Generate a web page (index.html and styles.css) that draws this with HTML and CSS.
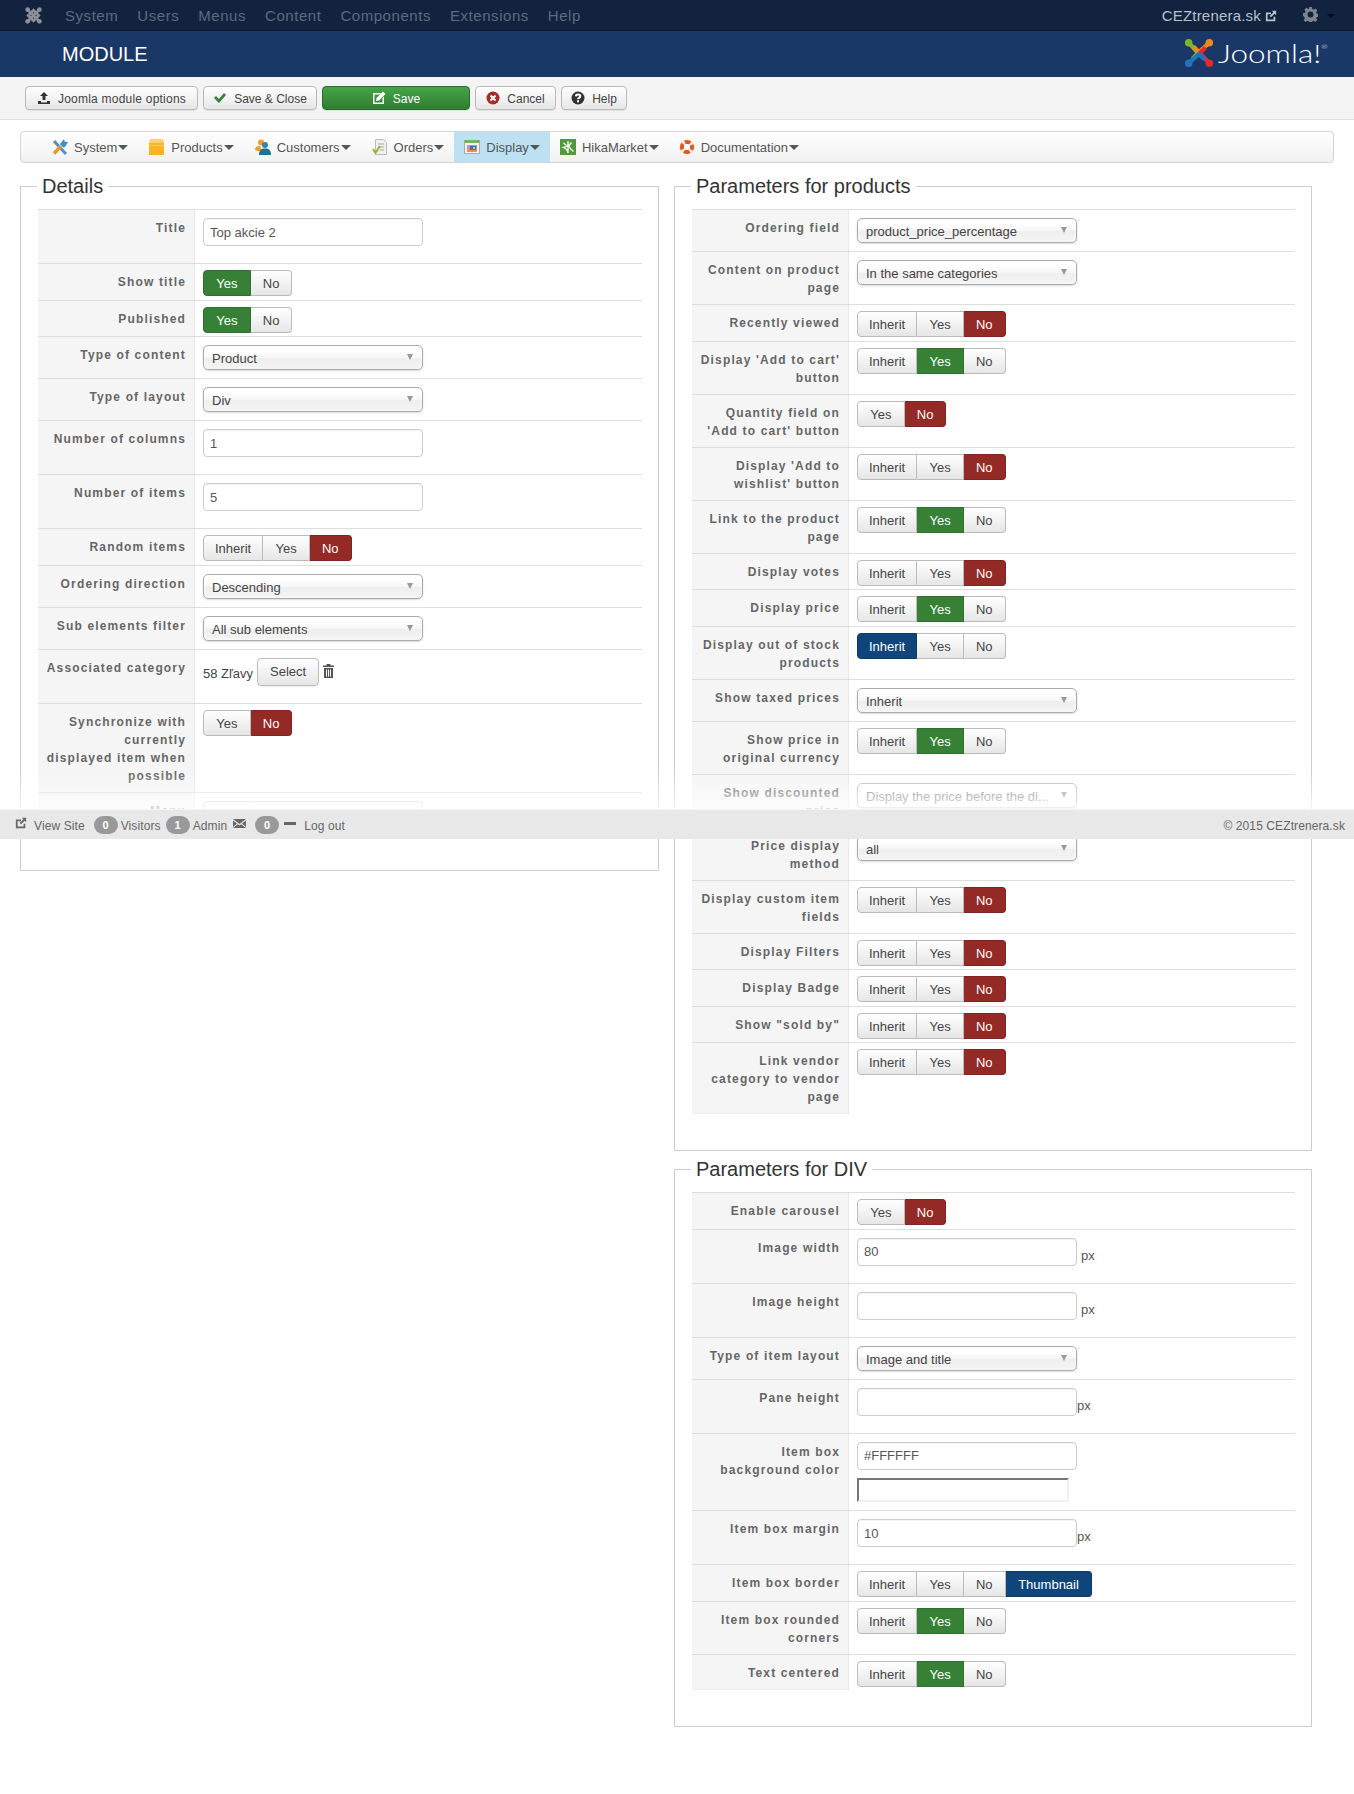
FILE: index.html
```html
<!DOCTYPE html>
<html lang="en">
<head>
    <meta charset="UTF-8">
    <title>MODULE</title>
    <link rel="stylesheet" href="styles.css">
</head>
<body>

<svg class="defs" aria-hidden="true">
    <symbol id="share" viewBox="0 0 14 14">
        <path fill="currentColor" d="M1 3h6v2H3v6h7V8h2v5H1zM8 1h5v5l-1.700-1.700L7 8.600 5.400 7l4.300-4.300z"/>
    </symbol>
</svg>

<nav class="topnav">
    <svg class="topnav-logo" viewBox="0 0 32 32">
        <path fill="none" stroke="currentColor" stroke-width="5" d="M16 6 26 16 16 26 6 16zM6 6 26 26M26 6 6 26"/>
        <g fill="currentColor">
            <circle cx="5" cy="5" r="4.500"/><circle cx="27" cy="5" r="4.500"/><circle cx="27" cy="27" r="4.500"/><circle cx="5" cy="27" r="4.500"/>
        </g>
    </svg>
    <a href="#">System</a>
    <a href="#">Users</a>
    <a href="#">Menus</a>
    <a href="#">Content</a>
    <a href="#">Components</a>
    <a href="#">Extensions</a>
    <a href="#">Help</a>
    <div class="topnav-right">
        <a href="#" class="site-link">CEZtrenera.sk</a>
        <svg class="site-icon"><use href="#share"/></svg>
        <svg class="gear" viewBox="0 0 16 16"><path fill="currentColor" fill-rule="evenodd" d="M6.500 0h3l.4 2.200 1.400.6 1.900-1.300 2.100 2.100-1.300 1.900.6 1.400 2.400.4v2.900l-2.400.4-.6 1.400 1.300 1.900-2.100 2.100-1.900-1.300-1.400.6-.4 1.500h-3l-.4-1.500-1.400-.6-1.900 1.300-2.100-2.100 1.300-1.900-.6-1.400L0 9.400V6.500l2.200-.4.6-1.400-1.300-1.900 2.100-2.100 1.900 1.300 1.400-.6zM8 4.800a3.200 3.200 0 1 0 0 6.400 3.200 3.200 0 0 0 0-6.400z"/></svg>
        <span class="gear-caret"></span>
    </div>
</nav>

<header class="pagehead">
    <h1>MODULE</h1>
    <div class="brand">
        <svg class="brand-icon" viewBox="0 0 32 32">
            <g fill="none" stroke-width="4.500" stroke-linejoin="round">
                <path stroke="#7ab52f" d="M5 5 15 16 9 22"/>
                <path stroke="#f18a1c" d="M27 5 16 15 10 9"/>
                <path stroke="#e5292f" d="M27 27 17 16 23 10"/>
                <path stroke="#1f74bb" d="M5 27 16 17 22 23"/>
            </g>
            <circle cx="5" cy="5" r="4" fill="#7ab52f"/><circle cx="27" cy="5" r="4" fill="#f18a1c"/>
            <circle cx="27" cy="27" r="4" fill="#e5292f"/><circle cx="5" cy="27" r="4" fill="#1f74bb"/>
        </svg>
        <span class="brand-name">Joomla!<sup>®</sup></span>
    </div>
</header>

<div class="toolbar">
    <button class="btn btn-opts">
        <svg class="ic ic-dark" viewBox="0 0 14 14"><path fill="currentColor" d="M7 1l4 4H8.500v4h-3V5H3zM1 10h3v1.500h6V10h3v3H1z"/></svg>Joomla module options
    </button>
    <button class="btn btn-close">
        <svg class="ic ic-green" viewBox="0 0 14 14"><path fill="currentColor" d="M1 7l2-2 3 3 5-6 2 2-7 8z"/></svg>Save &amp; Close
    </button>
    <button class="btn btn-save">
        <svg class="ic" viewBox="0 0 14 14"><path fill="currentColor" d="M1 2h8L7.500 3.500H2.500v8h8V7L12 5.500V13H1zM11 .5 13.500 3 7 9.500 4 10l.5-3z"/></svg>Save
    </button>
    <button class="btn btn-cancel">
        <svg class="ic ic-red" viewBox="0 0 14 14"><circle cx="7" cy="7" r="6.500" fill="currentColor"/><path stroke="#fff" stroke-width="2" d="M4.500 4.500l5 5m0-5l-5 5"/></svg>Cancel
    </button>
    <button class="btn btn-help">
        <svg class="ic ic-dark" viewBox="0 0 14 14"><circle cx="7" cy="7" r="6.500" fill="currentColor"/><path fill="none" stroke="#fff" stroke-width="2" d="M4.800 5.400C5 2.800 9.300 3 9.300 5.300 9.300 6.800 7 6.800 7 8.300"/><rect x="6" y="9.300" width="2" height="2" fill="#fff"/></svg>Help
    </button>
</div>

<ul class="menubar">
    <li><svg class="mi" viewBox="0 0 16 16"><path stroke="#4b93cf" stroke-width="3" d="M2 2l12 13"/><path stroke="#eb962c" stroke-width="3.500" d="M2 14.500 9 7"/><path fill="#3d8fd0" d="M8 5l4-5 .8 2.800L16 3l-3 5-2 .5z"/></svg>System<span class="caret"></span></li>
    <li><svg class="mi" viewBox="0 0 16 16"><rect x="0" y="4" width="15" height="12" fill="#fbb321"/><path fill="#fcd36a" d="M1 0h13l1 4H0z"/><rect y="6" width="15" height="1" fill="#ffd27a"/></svg>Products<span class="caret"></span></li>
    <li><svg class="mi" viewBox="0 0 16 16"><circle cx="6" cy="3.500" r="3" fill="#f29b2a"/><path fill="#f29b2a" d="M0 11c0-3 2-4 5-4l2 5H2z"/><circle cx="10" cy="6" r="3" fill="#2f86ad"/><path fill="#1f6f96" d="M4 16c0-5 2-6.500 6-6.500s6 1.500 6 6.500z"/></svg>Customers<span class="caret"></span></li>
    <li><svg class="mi" viewBox="0 0 16 16"><path fill="#f0f0ee" stroke="#bbb" d="M3.500.5h8l3 3v12h-11z"/><path stroke="#aaa" d="M6 5h6M6 8h6M8 11h4"/><path fill="none" stroke="#8cb92e" stroke-width="2" d="M1 10l2.500 4L8 7"/></svg>Orders<span class="caret"></span></li>
    <li class="active"><svg class="mi" viewBox="0 0 16 16"><rect x=".5" y="1.500" width="15" height="13" fill="#f4f4f4" stroke="#aaa"/><rect x="1" y="1" width="14" height="3" fill="#6cb95b"/><rect x="3" y="6" width="10" height="7" fill="#e88a80"/><rect x="6" y="7" width="6" height="4" fill="#3478c0"/><rect x="9" y="8" width="2" height="2" fill="#f2c33a"/></svg>Display<span class="caret"></span></li>
    <li><svg class="mi" viewBox="0 0 16 16"><rect width="16" height="16" fill="#4f9a3c"/><path fill="none" stroke="#fff" stroke-width="1.300" d="M8 2v12C7.500 11 6 9.500 3.500 8.500 6 8 7.500 6.500 8 5.500 9 8 10 10 13.500 12.500M11.500 3.500 8.500 7M3.500 4l2.500 2"/></svg>HikaMarket<span class="caret"></span></li>
    <li><svg class="mi" viewBox="0 0 16 16"><circle cx="8" cy="8" r="7.800" fill="#e8e8e8"/><circle cx="8" cy="8" r="5" fill="none" stroke="#e2581c" stroke-width="4" stroke-dasharray="5.500 2.350" stroke-dashoffset="2.750"/><circle cx="8" cy="8" r="3" fill="#fff"/></svg>Documentation<span class="caret"></span></li>
</ul>

<div class="columns">
    <!-- Left column -->
    <div class="col col-left">
        <fieldset class="group group-details">
            <legend>Details</legend>
            <div class="row"><div class="key">Title</div><div class="val val-input"><input class="field" type="text" value="Top akcie 2"></div></div>
            <div class="row"><div class="key">Show title</div><div class="val val-radio"><div class="radio"><span class="opt-yes on-yes">Yes</span><span>No</span></div></div></div>
            <div class="row"><div class="key">Published</div><div class="val val-radio"><div class="radio"><span class="opt-yes on-yes">Yes</span><span>No</span></div></div></div>
            <div class="row"><div class="key">Type of content</div><div class="val val-select"><div class="chzn"><span>Product</span></div></div></div>
            <div class="row"><div class="key">Type of layout</div><div class="val val-select"><div class="chzn"><span>Div</span></div></div></div>
            <div class="row"><div class="key">Number of columns</div><div class="val val-input"><input class="field" type="text" value="1"></div></div>
            <div class="row"><div class="key">Number of items</div><div class="val val-input"><input class="field" type="text" value="5"></div></div>
            <div class="row"><div class="key">Random items</div><div class="val val-radio"><div class="radio"><span class="opt-inh">Inherit</span><span class="opt-yes">Yes</span><span class="on-no">No</span></div></div></div>
            <div class="row"><div class="key">Ordering direction</div><div class="val val-select"><div class="chzn"><span>Descending</span></div></div></div>
            <div class="row"><div class="key">Sub elements filter</div><div class="val val-select"><div class="chzn"><span>All sub elements</span></div></div></div>
            <div class="row"><div class="key">Associated category</div>
                <div class="val val-cat">
                    <span class="cat-name">58 Zľavy</span>
                    <button class="btn btn-select">Select</button>
                    <svg class="trash" viewBox="0 0 11 14"><path fill="currentColor" d="M3.500 0h4v1.500H11V3H0V1.500h3.500zM1 4h9v10H1zM3 5.500v7h1v-7zm2 0v7h1v-7zm2 0v7h1v-7z"/></svg>
                </div>
            </div>
            <div class="row"><div class="key">Synchronize with<br>currently<br>displayed item when<br>possible</div><div class="val val-radio"><div class="radio"><span class="opt-yes">Yes</span><span class="on-no">No</span></div></div></div>
            <div class="row"><div class="key">Menu</div><div class="val val-menu"><input class="field" type="text"></div></div>
        </fieldset>
    </div>

    <!-- Right column -->
    <div class="col col-right">
        <fieldset class="group">
            <legend>Parameters for products</legend>
            <div class="row"><div class="key">Ordering field</div><div class="val val-select"><div class="chzn"><span>product_price_percentage</span></div></div></div>
            <div class="row"><div class="key">Content on product page</div><div class="val val-select"><div class="chzn"><span>In the same categories</span></div></div></div>
            <div class="row"><div class="key">Recently viewed</div><div class="val val-radio"><div class="radio"><span class="opt-inh">Inherit</span><span class="opt-yes">Yes</span><span class="on-no">No</span></div></div></div>
            <div class="row"><div class="key">Display 'Add to cart' button</div><div class="val val-radio"><div class="radio"><span class="opt-inh">Inherit</span><span class="opt-yes on-yes">Yes</span><span>No</span></div></div></div>
            <div class="row"><div class="key">Quantity field on 'Add to cart' button</div><div class="val val-radio"><div class="radio"><span class="opt-yes">Yes</span><span class="on-no">No</span></div></div></div>
            <div class="row"><div class="key">Display 'Add to wishlist' button</div><div class="val val-radio"><div class="radio"><span class="opt-inh">Inherit</span><span class="opt-yes">Yes</span><span class="on-no">No</span></div></div></div>
            <div class="row"><div class="key">Link to the product page</div><div class="val val-radio"><div class="radio"><span class="opt-inh">Inherit</span><span class="opt-yes on-yes">Yes</span><span>No</span></div></div></div>
            <div class="row"><div class="key">Display votes</div><div class="val val-radio"><div class="radio"><span class="opt-inh">Inherit</span><span class="opt-yes">Yes</span><span class="on-no">No</span></div></div></div>
            <div class="row"><div class="key">Display price</div><div class="val val-radio"><div class="radio"><span class="opt-inh">Inherit</span><span class="opt-yes on-yes">Yes</span><span>No</span></div></div></div>
            <div class="row"><div class="key">Display out of stock products</div><div class="val val-radio"><div class="radio"><span class="opt-inh on-def">Inherit</span><span class="opt-yes">Yes</span><span>No</span></div></div></div>
            <div class="row"><div class="key">Show taxed prices</div><div class="val val-select"><div class="chzn"><span>Inherit</span></div></div></div>
            <div class="row"><div class="key">Show price in original currency</div><div class="val val-radio"><div class="radio"><span class="opt-inh">Inherit</span><span class="opt-yes on-yes">Yes</span><span>No</span></div></div></div>
            <div class="row"><div class="key">Show discounted price</div><div class="val val-select"><div class="chzn chzn-off"><span>Display the price before the di...</span></div></div></div>
            <div class="row"><div class="key">Price display method</div><div class="val val-select"><div class="chzn"><span>all</span></div></div></div>
            <div class="row"><div class="key">Display custom item fields</div><div class="val val-radio"><div class="radio"><span class="opt-inh">Inherit</span><span class="opt-yes">Yes</span><span class="on-no">No</span></div></div></div>
            <div class="row"><div class="key">Display Filters</div><div class="val val-radio"><div class="radio"><span class="opt-inh">Inherit</span><span class="opt-yes">Yes</span><span class="on-no">No</span></div></div></div>
            <div class="row"><div class="key">Display Badge</div><div class="val val-radio"><div class="radio"><span class="opt-inh">Inherit</span><span class="opt-yes">Yes</span><span class="on-no">No</span></div></div></div>
            <div class="row"><div class="key">Show "sold by"</div><div class="val val-radio"><div class="radio"><span class="opt-inh">Inherit</span><span class="opt-yes">Yes</span><span class="on-no">No</span></div></div></div>
            <div class="row row-last"><div class="key">Link vendor category to vendor page</div><div class="val val-radio"><div class="radio"><span class="opt-inh">Inherit</span><span class="opt-yes">Yes</span><span class="on-no">No</span></div></div></div>
        </fieldset>

        <fieldset class="group">
            <legend>Parameters for DIV</legend>
            <div class="row"><div class="key">Enable carousel</div><div class="val val-radio"><div class="radio"><span class="opt-yes">Yes</span><span class="on-no">No</span></div></div></div>
            <div class="row"><div class="key">Image width</div><div class="val val-input"><input class="field" type="text" value="80"><span class="unit unit-gap">px</span></div></div>
            <div class="row"><div class="key">Image height</div><div class="val val-input"><input class="field" type="text"><span class="unit unit-gap">px</span></div></div>
            <div class="row"><div class="key">Type of item layout</div><div class="val val-select"><div class="chzn"><span>Image and title</span></div></div></div>
            <div class="row"><div class="key">Pane height</div><div class="val val-input"><input class="field" type="text"><span class="unit">px</span></div></div>
            <div class="row"><div class="key">Item box background color</div>
                <div class="val val-color">
                    <input class="field" type="text" value="#FFFFFF">
                    <div class="swatch"></div>
                </div>
            </div>
            <div class="row"><div class="key">Item box margin</div><div class="val val-input"><input class="field" type="text" value="10"><span class="unit">px</span></div></div>
            <div class="row"><div class="key">Item box border</div><div class="val val-radio"><div class="radio"><span class="opt-inh">Inherit</span><span class="opt-yes">Yes</span><span>No</span><span class="on-def">Thumbnail</span></div></div></div>
            <div class="row"><div class="key">Item box rounded corners</div><div class="val val-radio"><div class="radio"><span class="opt-inh">Inherit</span><span class="opt-yes on-yes">Yes</span><span>No</span></div></div></div>
            <div class="row row-last"><div class="key">Text centered</div><div class="val val-radio"><div class="radio"><span class="opt-inh">Inherit</span><span class="opt-yes on-yes">Yes</span><span>No</span></div></div></div>
        </fieldset>
    </div>
</div>

<!-- Status bar stays over the page -->
<div class="statusbar">
    <svg class="sb-icon"><use href="#share"/></svg>
    <span class="sb-text sb-view">View Site</span>
    <span class="badge">0</span><span class="sb-text">Visitors</span>
    <span class="badge">1</span><span class="sb-text">Admin</span>
    <svg class="sb-mail" viewBox="0 0 13 9"><path fill="currentColor" d="M0 0h13L6.500 5zM0 1.500 4 4.500 0 8zM13 1.500 9 4.500 13 8zM4.800 5.200 6.500 6.500 8.200 5.200 13 9H0z"/></svg>
    <span class="badge">0</span>
    <span class="sb-minus"></span>
    <span class="sb-text">Log out</span>
    <span class="sb-copy">© 2015 CEZtrenera.sk</span>
</div>

</body>
</html>
```

FILE: styles.css
```css
body {
    margin: 0;
    font-family: "Liberation Sans", Arial, sans-serif;
    font-size: 13px;
    line-height: 18px;
    color: #555;
    background-color: #fff;
    min-height: 1794px;
}
.defs {
    position: absolute;
    width: 0;
    height: 0;
}

/* Top nav */
.topnav {
    display: flex;
    align-items: center;
    padding-top: 1px;
    box-sizing: border-box;
    height: 31px;
    background-color: #12233f;
    border-bottom: 1px solid #0c182c;
    font-size: 15px;
}
.topnav a {
    color: #5d6a80;
    text-decoration: none;
    margin-right: 19px;
    letter-spacing: .55px;
}
.topnav-logo {
    width: 17px;
    height: 17px;
    margin: -1px 23px 0 25px;
    color: #8a8f98;
}
.topnav-right {
    margin-left: auto;
    display: flex;
    align-items: center;
}
.topnav .site-link {
    color: #b9c0cb;
    margin-right: 4px;
    font-size: 15px;
    letter-spacing: .2px;
}
.site-icon {
    width: 12px;
    height: 12px;
    color: #b9c0cb;
    margin-right: 26px;
}
.gear {
    width: 15px;
    height: 15px;
    color: #7d8592;
    margin: -3px 9px 0 0;
}
.gear-caret {
    border: 4px solid transparent;
    border-top: 4px solid #050b16;
    border-bottom: 0;
    margin-right: 19px;
}

/* Page header */
.pagehead {
    display: flex;
    align-items: center;
    justify-content: space-between;
    height: 46px;
    background-color: #1a3867;
}
.pagehead h1 {
    margin: 0 0 0 62px;
    font-size: 20px;
    font-weight: normal;
    color: #fff;
}
.brand {
    display: flex;
    align-items: center;
    margin: -3px 54px 0 0;
}
.brand-icon {
    width: 30px;
    height: 30px;
    margin-right: 4px;
}
.brand-name {
    display: inline-block;
    width: 82px;
    font-family: Lato, "Open Sans", sans-serif;
    font-weight: 300;
    font-size: 25px;
    line-height: 30px;
    color: #fff;
    white-space: nowrap;
    transform: scaleX(1.26);
    transform-origin: left center;
}
.brand-name sup {
    font-size: 6px;
    line-height: 0;
    vertical-align: 14px;
}

/* Toolbar */
.toolbar {
    display: flex;
    gap: 5px;
    padding: 9px 0 0 25px;
    height: 33px;
    background-color: #f4f4f4;
    border-bottom: 1px solid #dedede;
}
.btn {
    display: inline-flex;
    align-items: center;
    justify-content: center;
    height: 24px;
    padding: 1px 0 0;
    font-family: inherit;
    font-size: 12px;
    color: #444;
    background: linear-gradient(#fff, #e6e6e6);
    border: 1px solid #bbb;
    border-radius: 4px;
    box-shadow: 0 1px 1px rgba(0, 0, 0, .08);
}
.btn-opts {
    width: 173px;
    letter-spacing: .22px;
}
.btn-close { width: 114px; }
.btn-cancel { width: 81px; }
.btn-help { width: 66px; }
.btn-save {
    width: 148px;
    color: #fff;
    background: linear-gradient(#46a546, #2f7d32);
    border-color: #2a6b2d;
}
.ic {
    width: 14px;
    height: 14px;
    margin: -1px 7px 0 0;
}
.ic-dark { color: #333; }
.ic-green { color: #378137; }
.ic-red { color: #a32a25; }

/* Menu bar */
.menubar {
    display: flex;
    list-style: none;
    height: 30px;
    width: 1291px;
    margin: 11px 0 0 20px;
    padding: 0 0 0 21px;
    background: linear-gradient(#fff, #f1f1f1);
    border: 1px solid #d4d4d4;
    border-radius: 4px;
}
.menubar li {
    display: flex;
    align-items: center;
    padding: 1px 10px 0;
    color: #555;
}
.menubar li:nth-child(-n+3) {
    padding-right: 11px;
}
.menubar li.active {
    background-color: #bde0f2;
}
.mi {
    width: 16px;
    height: 16px;
    margin: -1px 6px 0 0;
}
.caret {
    border: 5px solid transparent;
    border-top: 5px solid #555;
    border-bottom: 0;
    margin-left: 1px;
}

/* Columns */
.columns {
    display: flex;
    gap: 15px;
    margin: 8px 0 0 20px;
}
.col-left { width: 639px; }
.col-right { width: 638px; }
.group {
    margin: 0 0 3px;
    padding: 8px 16px 36px 17px;
    border: 1px solid #ccc;
    min-width: 0;
}
.group-details {
    padding-bottom: 41px;
}
.group legend {
    margin-left: -1px;
    padding: 0 5px;
    font-size: 20px;
    line-height: 30px;
    color: #333;
}

/* Rows */
.row {
    display: flex;
    border-top: 1px solid #ddd;
}
.row-last .key {
    border-bottom: 1px solid #eee;
}
.key {
    flex: none;
    box-sizing: border-box;
    width: 157px;
    padding: 9px 8px 7px;
    text-align: right;
    font-size: 12px;
    font-weight: bold;
    letter-spacing: 1.15px;
    color: #666;
    background-color: #f5f5f5;
    border-right: 1px solid #e8e8e8;
}
.val {
    padding-left: 8px;
    display: flex;
    align-items: flex-start;
}
.val-input { padding-top: 8px; min-height: 45px; }
.val-menu { padding-top: 8px; }
.val-select { padding-top: 8px; padding-bottom: 8px; }
.val-radio { padding-top: 6px; padding-bottom: 3.500px; }
.val-cat { padding-top: 8px; min-height: 45px; }
.val-color { padding-top: 8px; flex-direction: column; }

.field {
    box-sizing: border-box;
    width: 220px;
    height: 28px;
    padding: 0 6px;
    font-family: inherit;
    font-size: 13px;
    color: #555;
    background-color: #fff;
    border: 1px solid #ccc;
    border-radius: 4px;
    box-shadow: inset 0 1px 1px rgba(0, 0, 0, .05);
}
.unit {
    margin-top: 9px;
    line-height: 18px;
    color: #555;
}
.unit-gap { margin-left: 4px; }

.chzn {
    position: relative;
    box-sizing: border-box;
    width: 220px;
    height: 25px;
    padding: 0 22px 0 8px;
    line-height: 25px;
    color: #444;
    background: linear-gradient(#fff 20%, #f6f6f6 50%, #eee 52%, #f4f4f4);
    border: 1px solid #aaa;
    border-radius: 5px;
    box-shadow: 0 1px 2px rgba(0, 0, 0, .15), inset 0 0 3px #fff;
    white-space: nowrap;
    overflow: hidden;
}
.chzn::after {
    content: "";
    position: absolute;
    right: 9px;
    top: 8px;
    border: 3.500px solid transparent;
    border-top: 6px solid #999;
    border-bottom: 0;
}
.chzn-off {
    color: #777;
    background: #fff;
    border-color: #bbb;
}

.radio {
    display: inline-flex;
    height: 26px;
}
.radio span {
    box-sizing: border-box;
    padding: 0 12px;
    line-height: 25px;
    color: #444;
    background: linear-gradient(#fff, #e6e6e6);
    border: 1px solid #bbb;
    border-left-width: 0;
}
.radio span:first-child {
    border-left-width: 1px;
    border-radius: 4px 0 0 4px;
}
.radio span:last-child {
    border-radius: 0 4px 4px 0;
}
.radio .on-def {
    padding: 0 12.600px;
}
.radio .opt-inh {
    padding: 0 11px;
}
.radio .opt-yes {
    padding: 0 12.300px;
}
.radio .on-yes {
    color: #fff;
    background: #378137;
    border-color: #2f6f2f;
}
.radio .on-no {
    color: #fff;
    background: #942a25;
    border-color: #7f2420;
}
.radio .on-def {
    color: #fff;
    background: #10457b;
    border-color: #0d3a68;
}

.cat-name {
    margin-top: 7px;
    color: #444;
}
.btn-select {
    height: 28px;
    margin: 0 4px 0 4px;
    padding: 0 12px;
    font-size: 13px;
}
.trash {
    width: 11px;
    height: 14px;
    margin-top: 6px;
    color: #555;
}
.swatch {
    box-sizing: border-box;
    width: 212px;
    height: 24px;
    margin: 8px 0 8.500px;
    border: 2px solid;
    border-color: #767676 #f0f0f0 #f0f0f0 #767676;
}

/* Status bar */
.statusbar {
    position: absolute;
    top: 809px;
    left: 0;
    right: 0;
    display: flex;
    align-items: center;
    padding: 2px 0 0 15px;
    box-sizing: border-box;
    height: 30px;
    background-color: #e8e8e8;
    border-top: 1px solid #d4d4d4;
    font-size: 12px;
    letter-spacing: .1px;
    color: #666;
}
.statusbar::before {
    content: "";
    position: absolute;
    left: 0;
    right: 0;
    bottom: 100%;
    height: 38px;
    background: linear-gradient(rgba(255, 255, 255, 0), rgba(255, 255, 255, .8));
}
.sb-icon {
    width: 12px;
    height: 12px;
    margin-top: -5px;
}
.sb-text { margin-left: 3px; }
.sb-view { margin: 0 4px 0 7px; }
.badge {
    width: 24px;
    height: 18px;
    line-height: 18px;
    margin: -1px 0 0 5px;
    text-align: center;
    font-size: 11px;
    font-weight: bold;
    color: #fff;
    background-color: #999;
    border-radius: 9px;
}
.sb-mail {
    width: 13px;
    height: 9px;
    margin: -5px 4px 0 6px;
    color: #666;
}
.sb-minus {
    width: 12px;
    height: 3px;
    margin: -4px 5px 0 5px;
    background-color: #666;
}
.sb-copy {
    margin-left: auto;
    margin-right: 9px;
}
```
